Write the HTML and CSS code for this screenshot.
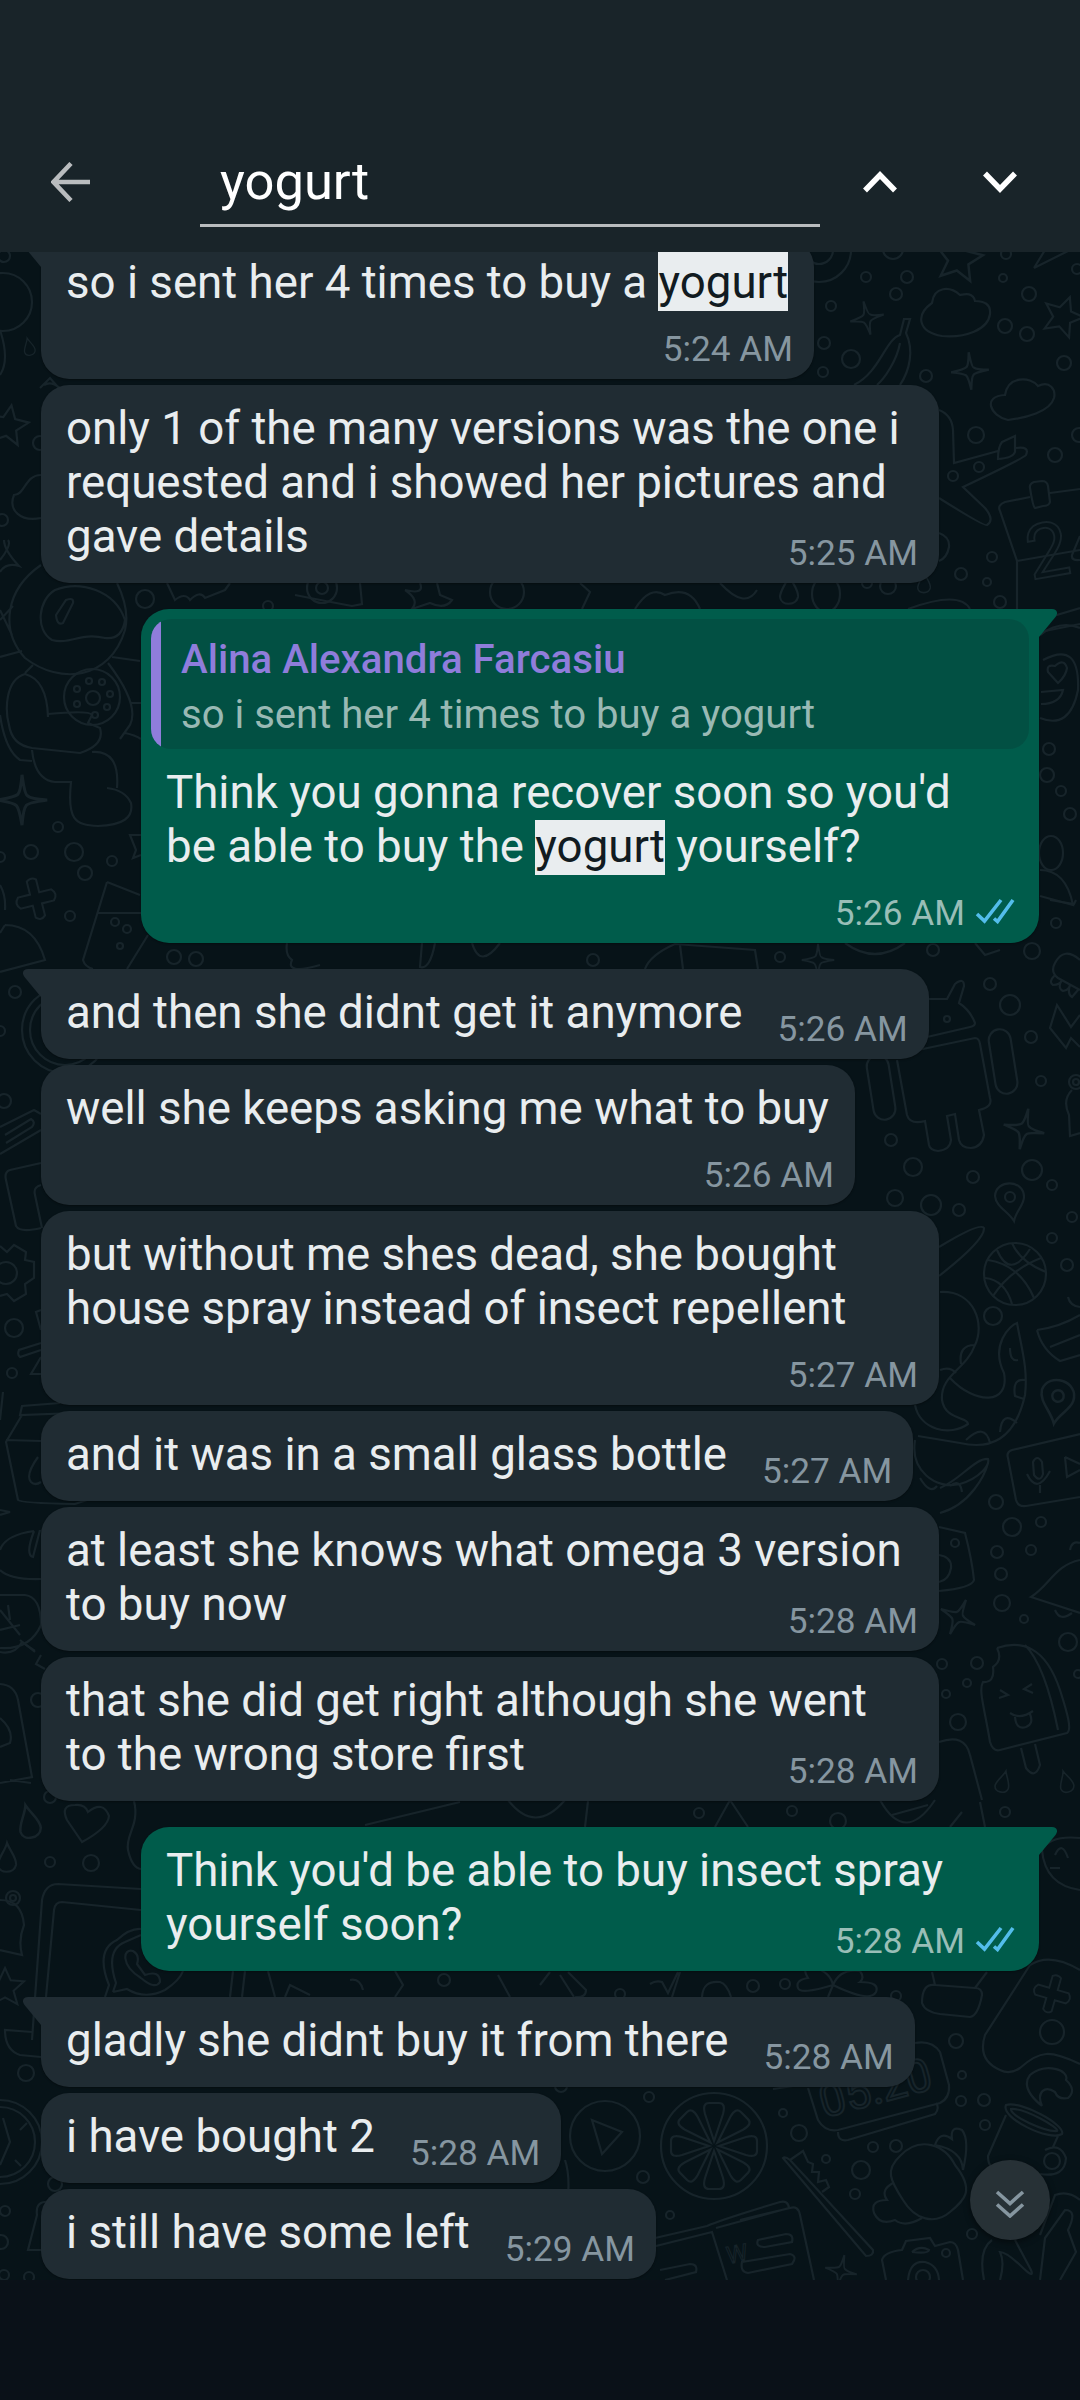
FILE: index.html
```html
<!DOCTYPE html>
<html lang="en">
<head>
<meta charset="utf-8">
<title>Chat search</title>
<link rel="stylesheet" href="styles.css">
</head>
<body>
<svg class="defs" aria-hidden="true">
  <defs>
    <symbol id="tail" viewBox="0 0 18 28"><path d="M18 0H5C0 0-1.500 4 1.500 8L18 28Z"/></symbol>
    <symbol id="ticks" viewBox="0 0 40 26"><path d="M2 16L9.500 23L26 2M19 20.500L22.500 23.500L38 2" fill="none" stroke="currentColor" stroke-width="3.600"/></symbol>
    <path id="spark" d="M0-18Q2-3 4-3Q6-1 18 0Q4 2 3 4Q1 6 0 18Q-2 6-4 4Q-6 2-18 0Q-5-2-3-4Q-1-6 0-18Z"/>
    <path id="star" d="M0-20L6-7L20-6L9 4L13 18L0 11L-13 18L-9 4L-20-6L-6-7Z"/>
    <path id="drop" d="M0-15C3-7 10 0 9 7C7 16-8 16-9 7C-9 0-2-7 0-15Z"/>
    <path id="pin" d="M4 24C-2 14-14 10-15-1C-14-18 14-18 14 0C14 8 6 14 4 24ZM5 0A5 5 0 1 1-5 0A5 5 0 1 1 5 0"/>
    <path id="petal" d="M0-5L-9-32Q-12-43-5-43H5Q12-43 9-32Z"/>
    <path id="plus" d="M-5-20Q0-24 5-20V-6H18Q24 0 18 6H5V19Q0 24-5 19V6H-18Q-24 0-18-6H-5Z"/>
  </defs>
</svg>
<div class="screen">
  <header class="searchbar">
    <svg class="back" viewBox="0 0 40 40"><path d="M20 1.500L2.500 20L20 38.500M2 20H39" /></svg>
    <div class="field">yogurt</div>
    <svg class="nav" viewBox="0 0 36 24"><path d="M3 20.500L18 5L33 20.500"/></svg>
    <svg class="nav" viewBox="0 0 36 24"><path d="M3 3.500L18 19L33 3.500"/></svg>
  </header>

  <main class="chat">
    <svg class="wallpaper" viewBox="0 252 1080 2028" aria-hidden="true">
      <!-- upper right -->
      <circle cx="866" cy="277" r="5"/><circle cx="907" cy="277" r="6"/><circle cx="896" cy="294" r="6"/><circle cx="831" cy="306" r="5"/><circle cx="824" cy="343" r="6"/><circle cx="823" cy="372" r="5"/><circle cx="851" cy="359" r="9"/><circle cx="926" cy="376" r="6"/><circle cx="1029" cy="294" r="7"/><circle cx="1003" cy="278" r="4"/><circle cx="1006" cy="254" r="5"/><circle cx="1005" cy="326" r="7"/><circle cx="1027" cy="334" r="7"/><circle cx="1064" cy="363" r="7"/><circle cx="976" cy="435" r="8"/><circle cx="979" cy="467" r="5"/><circle cx="953" cy="476" r="5"/><circle cx="1055" cy="455" r="7"/><circle cx="1079" cy="435" r="7"/><circle cx="992" cy="557" r="5"/><circle cx="961" cy="574" r="6"/><circle cx="987" cy="582" r="4"/><circle cx="1000" cy="602" r="6"/><circle cx="1077" cy="269" r="5"/><circle cx="893" cy="249" r="10"/>
      <circle cx="819" cy="250" r="32"/><circle cx="819" cy="250" r="14"/><circle cx="867" cy="583" r="5"/><circle cx="888" cy="586" r="8"/>
      <use href="#star" transform="translate(959 258) rotate(10) scale(1.150)"/><use href="#star" transform="translate(1063 316) rotate(20)"/>
      <path d="M932 303C915 315 918 332 942 336C965 338 988 330 990 314C991 304 984 301 975 301C973 292 965 294 960 295C950 286 934 286 932 303ZM1005 395C1008 376 1030 376 1038 386C1050 380 1056 390 1054 398C1050 412 1025 418 1008 420C990 416 982 396 1005 395ZM1034 268L1045 250M1034 268L1070 250"/>
      <use href="#spark" transform="translate(867 318) rotate(-12) scale(.95)"/><use href="#spark" transform="translate(970 371) rotate(-4) scale(1.050)"/>
      <path d="M854 385C880 372 885 340 900 335L904 319H910L906 333C914 350 910 370 900 385M900 343C897 360 885 378 877 385"/>
      <path d="M939 410Q952 415 953 430L954 463L998 451M1016 448Q1030 446 1026 455Q1024 458 963 487L985 508Q995 520 987 525Q985 527 939 498M1002 442L1015 436L1015 452Q1013 458 998 459Q998 447 1002 442Z"/>
      <path d="M1030 497L1005 502Q997 505 1000 511L1017 561V609M1050 493L1080 489M1017 561L1080 550M1034 482L1042 481Q1047 481 1048 486L1050 502Q1049 506 1043 506L1035 508Q1033 507 1030 488Q1029 484 1034 482ZM939 533Q950 537 949 547Q947 558 939 561M908 609Q960 590 970 609M1040 620L1080 608M1045 631L1080 624M1080 536L1072 555Q1071 561 1080 560"/>
      <text x="1031" y="580" font-size="76" transform="rotate(-10 1031 580)">2</text>
      <use href="#drop" x="789" y="590"/><use href="#drop" transform="translate(924 583) scale(.7)"/><ellipse cx="826" cy="594" rx="14" ry="18"/>
      <!-- right, beside the quoted reply -->
      <path d="M1040 635Q1060 620 1080 628M1043 660Q1080 640 1078 690Q1070 730 1040 718M1058 683L1048 672Q1046 664 1055 666Q1064 658 1067 668Q1066 676 1058 683ZM1041 692L1063 690Q1060 704 1041 704M1040 870Q1066 870 1073 905L1040 896"/>
      <circle cx="1049" cy="749" r="6"/><circle cx="1047" cy="775" r="7"/><circle cx="1061" cy="791" r="5"/><circle cx="1070" cy="814" r="6"/><ellipse cx="1051" cy="853" rx="12" ry="17"/><circle cx="1056" cy="923" r="5"/>
      <circle cx="933" cy="950" r="6"/><circle cx="1032" cy="951" r="8"/><circle cx="990" cy="984" r="6"/><circle cx="1010" cy="1005" r="10"/><circle cx="1031" cy="1037" r="6"/><circle cx="1041" cy="1081" r="5"/><circle cx="891" cy="1140" r="6"/>
      <path d="M1080 960Q1064 946 1055 963Q1050 972 1058 978L1080 990M1055 975Q1048 982 1053 985Q1060 985 1062 980Q1057 988 1063 991Q1069 990 1070 985Q1067 994 1072 997L1078 990M1080 1015L1071 1027L1057 1005L1050 1028L1066 1048L1071 1038L1080 1047M1050 900L1074 904L1076 900"/>
      <path d="M925 999H947L955 984Q964 977 964 986L959 1003Q970 1010 975 1023Q975 1026 970 1027L927 1037M918 1050L975 1038Q979 1038 980 1044L990 1098Q993 1107 979 1110L984 1135Q982 1147 971 1148Q961 1148 959 1140L955 1114L947 1116L951 1140Q950 1150 938 1151Q930 1150 929 1145L925 1121Q910 1125 907 1115L897 1060"/>
      <circle cx="947" cy="1019" r="3"/><rect x="992" y="1029" width="22" height="65" rx="11" transform="rotate(-9 1003 1061)"/><rect x="870" y="1055" width="22" height="65" rx="11" transform="rotate(-9 881 1087)"/>
      <use href="#spark" transform="translate(1024 1129) rotate(12) scale(1.150)"/><circle cx="1076" cy="1082" r="7"/><circle cx="1076" cy="1082" r="3"/><path d="M1072 1090Q1062 1100 1069 1115L1070 1136L1080 1133"/>
      <!-- middle right -->
      <circle cx="913" cy="1167" r="9"/><circle cx="973" cy="1177" r="6"/><circle cx="1032" cy="1170" r="10"/><circle cx="1052" cy="1185" r="5"/><circle cx="931" cy="1205" r="10"/><circle cx="895" cy="1198" r="8"/><circle cx="959" cy="1210" r="6"/><circle cx="1072" cy="1217" r="5"/><circle cx="1052" cy="1238" r="5"/><circle cx="1067" cy="1265" r="6"/><circle cx="993" cy="1316" r="9"/>
      <use href="#pin" x="1010" y="1197"/><use href="#pin" transform="translate(1058 1396) rotate(18) scale(1.150)"/>
      <circle cx="1015" cy="1274" r="31"/><path d="M988 1260Q1020 1265 1034 1298M985 1278Q1005 1280 1012 1304M1041 1258Q1010 1270 993 1296M1012 1243Q1020 1262 1046 1272M997 1250Q1010 1280 1030 1249"/>
      <path d="M939 1276Q985 1240 984 1228Q980 1222 939 1247M940 1292C975 1290 985 1325 975 1345C966 1370 940 1375 942 1400C945 1420 968 1417 968 1424C950 1437 920 1430 915 1405M950 1378C975 1405 1010 1405 1004 1373C990 1345 1010 1325 1017 1323C1022 1350 1028 1370 1025 1395C1015 1440 990 1450 960 1443L918 1436M915 1440C910 1470 935 1490 960 1484C980 1478 990 1465 988 1459C975 1458 960 1480 940 1488M940 1513C970 1505 985 1475 988 1463M975 1345Q958 1345 961 1364M940 1370Q950 1366 956 1373M1010 1348Q1010 1362 1018 1360M1025 1380Q1012 1378 1015 1396L1024 1399M1017 1423Q1002 1410 1000 1432M990 1443Q985 1422 966 1440M920 1478Q930 1495 937 1486M950 1486Q960 1478 962 1492"/>
      <path d="M1037 1330Q1060 1327 1080 1315M1037 1330Q1042 1350 1060 1361L1080 1355M1050 1347L1080 1335M1068 1297Q1070 1306 1080 1307M1080 1434L1012 1450Q1006 1452 1008 1458L1016 1500Q1018 1507 1026 1506L1080 1497M1065 1457L1067 1477L1080 1470M1065 1457L1080 1464M1033 1462Q1037 1454 1042 1462L1043 1474Q1040 1483 1034 1475ZM1027 1474Q1037 1495 1050 1471M1040 1485V1493"/>
      <circle cx="996" cy="1502" r="7"/><circle cx="1012" cy="1527" r="9"/><circle cx="1041" cy="1522" r="5"/><circle cx="997" cy="1552" r="6"/><circle cx="1031" cy="1550" r="5"/><circle cx="1001" cy="1574" r="6"/><circle cx="1002" cy="1603" r="8"/><circle cx="1024" cy="1619" r="4"/><circle cx="1068" cy="1642" r="9"/><circle cx="955" cy="1543" r="4"/>
      <path d="M939 1527L965 1533Q972 1560 974 1580Q972 1588 939 1591M939 1555Q952 1557 951 1568Q949 1580 939 1582M1080 1560C1055 1565 1050 1585 1031 1597L1080 1613M1055 1610Q1060 1622 1072 1613M1070 1550Q1072 1540 1080 1543"/>
      <use href="#spark" transform="translate(958 1617) rotate(25) scale(1.050)"/>
      <path d="M997 1648C1020 1640 1045 1645 1060 1690C1068 1715 1072 1730 1067 1733L1000 1750Q993 1752 990 1742C985 1710 978 1690 983 1682Q995 1683 993 1667Q1003 1660 997 1648M1025 1645Q1045 1665 1058 1730M1021 1748L1026 1768Q1035 1780 1040 1765L1035 1744M1000 1690L1008 1695L999 1698M1032 1684L1024 1689L1033 1693M1010 1713Q1020 1720 1033 1711M1015 1717Q1016 1730 1026 1727Q1034 1724 1030 1714M939 1742Q965 1733 970 1755L982 1800"/>
      <circle cx="942" cy="1664" r="5"/><circle cx="977" cy="1663" r="6"/><circle cx="967" cy="1683" r="4"/><circle cx="946" cy="1694" r="4"/><circle cx="958" cy="1722" r="8"/><circle cx="1078" cy="1674" r="4"/><use href="#drop" transform="translate(1003 1782) rotate(15) scale(.75)"/><use href="#drop" transform="translate(1066 1782) rotate(-15) scale(.75)"/>
      <circle cx="699" cy="1813" r="5"/><circle cx="792" cy="1811" r="5"/><circle cx="838" cy="1821" r="8"/><circle cx="1005" cy="1812" r="5"/><path d="M880 1800Q905 1845 935 1800M892 1815L928 1805M715 1827L730 1800L748 1827M980 1802L985 1827M950 1827L962 1812M508 1800Q535 1835 565 1800M585 1827L588 1801M365 1825L460 1802M1080 1838Q1050 1835 1042 1850Q1045 1885 1080 1890M1055 1855Q1062 1840 1068 1858M1050 1868L1060 1868"/>
      <!-- lower right -->
      <circle cx="753" cy="1986" r="6"/><circle cx="785" cy="1984" r="5"/><circle cx="620" cy="1994" r="5"/><circle cx="896" cy="1996" r="5"/><circle cx="1052" cy="2032" r="12"/><circle cx="956" cy="2041" r="7"/><circle cx="962" cy="2075" r="4"/><circle cx="961" cy="2101" r="5"/><circle cx="984" cy="2100" r="6"/><circle cx="985" cy="2125" r="5"/>
      <path d="M833 1985Q800 1995 798 1988Q795 1980 808 1978Q800 1965 815 1968Q830 1972 833 1985Q840 1968 860 1971Q865 1978 860 1982Q880 1982 876 1992Q870 2003 833 1985ZM833 1985L828 1997M932 1972L935 1985M975 1988L987 1972M935 1985Q922 1983 922 2003Q925 2012 940 2014L970 2017Q978 2016 982 1995Q982 1988 975 1988ZM650 1984Q656 1980 662 1982L668 1993L678 1972M680 1972L672 1997M702 1997Q703 1980 720 1982Q727 1984 731 1997M560 1975L574 1997M568 1972L586 1990Q586 1998 575 1997M540 1985L550 1972"/>
      <path d="M1030 1965L985 2035Q977 2060 1000 2070Q1010 2075 1020 2068C1040 2050 1050 2050 1080 2064M1030 1965Q1050 1952 1080 1970"/><use href="#plus" transform="translate(1052 1994) rotate(16) scale(.88)"/>
      <path d="M808 2088L818 2120Q825 2132 838 2130L940 2103Q950 2098 949 2085L940 2052Q932 2040 915 2043M838 2132Q838 2142 848 2140L935 2114Q940 2108 936 2103M773 2089L800 2085"/><text x="824" y="2118" font-size="46" transform="rotate(-15 824 2118)">05:20</text>
      <circle cx="605" cy="2136" r="35"/><path d="M592 2120L622 2132L602 2154Z"/><circle cx="649" cy="2097" r="5"/><circle cx="643" cy="2177" r="6"/><circle cx="561" cy="2086" r="6"/>
      <circle cx="714" cy="2146" r="53"/><g transform="translate(714 2146)"><use href="#petal"/><use href="#petal" transform="rotate(45)"/><use href="#petal" transform="rotate(90)"/><use href="#petal" transform="rotate(135)"/><use href="#petal" transform="rotate(180)"/><use href="#petal" transform="rotate(225)"/><use href="#petal" transform="rotate(270)"/><use href="#petal" transform="rotate(315)"/></g>
      <circle cx="783" cy="2113" r="4"/><circle cx="799" cy="2133" r="8"/><circle cx="826" cy="2159" r="4"/><circle cx="873" cy="2147" r="5"/><circle cx="896" cy="2146" r="6"/><circle cx="861" cy="2170" r="9"/><circle cx="855" cy="2194" r="5"/><circle cx="670" cy="2215" r="4"/><circle cx="972" cy="2234" r="5"/>
      <path d="M783 2158L866 2256Q874 2256 873 2250L790 2160Q785 2156 783 2158ZM790 2160L803 2151L808 2162L813 2164L812 2172L819 2172L818 2182L826 2180L829 2187L822 2192"/>
      <path d="M900 2156C920 2135 945 2145 955 2165C975 2190 965 2200 950 2212C935 2225 915 2220 903 2200C890 2180 885 2170 900 2156ZM935 2145Q940 2130 952 2139Q950 2125 962 2130Q970 2140 963 2170Q962 2150 935 2145M893 2183Q880 2190 887 2200Q870 2200 874 2213Q880 2226 895 2220Q905 2228 922 2218"/>
      <path d="M1042 2106Q1020 2088 1030 2075C1045 2062 1070 2070 1066 2080Q1077 2090 1068 2098Q1058 2100 1055 2092C1045 2085 1036 2092 1042 2106M1006 2105C1020 2100 1066 2125 1062 2134C1050 2142 1000 2118 1006 2105ZM1011 2109C1025 2108 1060 2128 1057 2131C1045 2132 1010 2116 1011 2109ZM1006 2115L988 2156Q988 2170 1000 2170M1058 2136L1053 2147M1045 2150Q1060 2142 1066 2158Q1065 2178 1040 2174"/><circle cx="1052" cy="2161" r="8"/>
      <path d="M655 2238L707 2226Q720 2220 780 2202Q788 2200 789 2208L716 2228M652 2247L712 2232L727 2280M740 2220L790 2208Q798 2205 800 2215L814 2280M758 2240L786 2234Q794 2234 792 2242L765 2247Q755 2247 758 2240ZM742 2262L790 2254Q798 2256 792 2264L748 2273Q740 2272 742 2262ZM660 2270L690 2264Q698 2264 696 2272L665 2280"/><text class="thin" x="728" y="2264" font-size="24" transform="rotate(-10 728 2264)">W</text>
      <use href="#spark" transform="translate(841 2271) rotate(12) scale(.9)"/><path d="M886 2280L882 2260Q884 2252 902 2250L906 2241L930 2238L935 2246L950 2242Q956 2242 958 2250L963 2280M908 2280Q910 2260 925 2262Q938 2265 939 2280M912 2252Q920 2245 929 2250Q928 2254 912 2252"/><circle cx="946" cy="2253" r="4"/><circle cx="923" cy="2277" r="7"/>
      <path d="M984 2280Q978 2250 992 2240M1000 2280Q1005 2262 1000 2252Q1006 2252 1020 2265Q1035 2280 1031 2270L1015 2240M1040 2235L1055 2195Q1068 2190 1080 2200M1040 2280L1045 2238L1065 2210Q1078 2210 1068 2230L1076 2252L1060 2280"/>
      <!-- left edge, top to bottom -->
      <circle cx="3" cy="302" r="29"/><circle cx="4" cy="256" r="6"/><use href="#drop" transform="translate(29 347) rotate(-12) scale(.6)"/><path d="M0 330Q10 360 0 375M40 388L50 378L65 395M44 385Q55 378 70 400"/>
      <use href="#star" transform="translate(8 425) rotate(10)"/><circle cx="40" cy="443" r="7"/><path d="M41 475C25 475 25 495 14 495C8 510 20 522 41 518M0 560Q12 545 8 540"/><circle cx="2" cy="520" r="6"/>
      <path d="M0 572Q6 562 19 566Q4 550 4 540"/>
      <path d="M41 565C5 590 0 630 25 658C60 685 110 680 125 630Q130 610 117 583M55 590C80 580 115 590 125 620Q122 640 105 638C80 632 70 645 52 640C35 630 38 600 55 590ZM56 615L66 600Q74 597 73 603L63 623Q57 626 56 615ZM33 665L25 673M0 657L22 651M0 620L13 606M0 610L12 635M112 657L140 661M108 663Q140 705 130 725L120 739M130 703H141M125 733Q135 735 141 739M48 717Q47 680 25 674C5 680 5 710 9 725Q12 745 32 748L80 753Q105 745 100 728L88 723L92 715Q90 710 48 714M32 750Q35 780 55 782L71 782C67 820 75 825 98 826Q135 825 131 803Q125 790 107 788M92 752Q120 750 117 788M0 715Q5 750 20 760L32 761"/>
      <circle cx="92" cy="697" r="28"/><circle cx="93" cy="698" r="7"/><circle cx="89" cy="681" r="3"/><circle cx="102" cy="682" r="3"/><circle cx="110" cy="694" r="3"/><circle cx="107" cy="707" r="3"/><circle cx="77" cy="704" r="3"/><circle cx="77" cy="689" r="3"/><circle cx="95" cy="715" r="3"/>
      <use href="#spark" transform="translate(22 800) scale(1.400)"/><circle cx="58" cy="827" r="5"/><circle cx="31" cy="852" r="7"/><circle cx="74" cy="852" r="9"/><circle cx="85" cy="873" r="7"/><circle cx="112" cy="861" r="5"/><circle cx="0" cy="857" r="5"/><circle cx="70" cy="916" r="5"/><use href="#plus" transform="translate(36 899) rotate(-14) scale(.95)"/>
      <path d="M141 835H130L136 850L133 858L141 855M107 882L140 895M107 882L83 960Q85 967 93 969M98 913H141M148 935L127 969M0 885Q6 895 5 910M5 925Q35 925 45 960L0 972M0 933L5 925"/><circle cx="115" cy="922" r="4"/><circle cx="127" cy="929" r="4"/><circle cx="120" cy="946" r="3"/><circle cx="15" cy="992" r="6"/><circle cx="0" cy="1031" r="5"/><circle cx="145" cy="599" r="9"/>
      <circle cx="65" cy="1030" r="43"/><circle cx="65" cy="1030" r="35"/><circle cx="4" cy="1101" r="7"/>
      <path d="M0 1127L34 1110L41 1114M0 1154L41 1130M5 1135L31 1119Q36 1122 32 1127L6 1143M41 1163L10 1170Q4 1172 6 1180L16 1226Q20 1233 41 1228M41 1185Q33 1187 35 1195L42 1228"/>
      <path d="M0 1246L7 1252L14 1245L26 1252L25 1260L34 1262V1278L25 1284L26 1294L14 1301L7 1294L0 1296"/><circle cx="6" cy="1273" r="11"/><circle cx="14" cy="1328" r="9"/><circle cx="12" cy="1373" r="5"/>
      <path d="M41 1310L36 1312L41 1330M41 1343L19 1350Q17 1355 20 1357L41 1350M41 1357L31 1374H41M0 1420L3 1392M60 1403L22 1406L20 1415L75 1413M22 1415L6 1442L18 1500Q20 1503 75 1504L90 1499M6 1440L41 1441M38 1457Q25 1475 31 1482Q35 1486 41 1482M0 1510L10 1512L0 1515M34 1531Q5 1535 0 1550M34 1531Q25 1555 33 1557L40 1530M0 1570Q10 1580 41 1579M0 1595H25Q41 1597 41 1625Q30 1650 0 1648M0 1610L20 1635M8 1605L10 1620M0 1630L20 1625M20 1640L35 1652"/>
      <circle cx="38" cy="1700" r="7"/><path d="M0 1684Q15 1685 18 1700L32 1777L0 1783M0 1718Q14 1730 10 1743L0 1747M10 1780L31 1783M41 1655L36 1664L45 1669M0 1652Q15 1655 22 1642L35 1651"/>
      <circle cx="50" cy="1797" r="6"/><use href="#drop" transform="translate(29 1822) rotate(-12) scale(1.150)"/><use href="#drop" transform="translate(7 1858)"/><circle cx="50" cy="1862" r="5"/><circle cx="91" cy="1863" r="8"/><path d="M82 1842L67 1820Q60 1805 75 1805Q85 1804 88 1812Q103 1800 109 1816Q108 1828 82 1842ZM134 1801C140 1825 125 1835 128 1850Q132 1868 141 1869"/>
      <path d="M32 2040L42 1900Q45 1884 58 1884L141 1889M46 1997L54 1910Q55 1902 62 1902L141 1910M105 1997L109 1985Q95 1950 117 1940Q130 1928 141 1929M113 1992L116 1983Q105 1950 125 1942L141 1935M113 1992L127 1989Q145 2000 165 1990Q180 1980 183 1971M141 1978C120 1965 123 1948 133 1951Q140 1955 137 1964L145 1975Q160 1970 160 1982Q155 1990 141 1978M233 1971L230 1997M245 1971L242 1997"/>
      <circle cx="13" cy="1898" r="7"/><circle cx="13" cy="1898" r="3"/><path d="M0 1900Q22 1900 24 1925Q18 1940 22 1955L0 1950"/><use href="#star" transform="translate(5 1987) scale(.95)"/><path d="M32 2032L5 2030Q5 2050 20 2055L41 2057"/><circle cx="26" cy="2073" r="8"/>
      <circle cx="0" cy="2142" r="42"/><circle cx="0" cy="2142" r="35"/><path d="M3 2118L10 2142L0 2165M20 2130L27 2123M15 2160L21 2166M50 2202Q35 2200 37 2215L28 2250H41"/><circle cx="55" cy="2184" r="7"/><circle cx="5" cy="2211" r="5"/><circle cx="1" cy="2242" r="7"/><circle cx="4" cy="2275" r="5"/><circle cx="29" cy="2277" r="5"/>
      <!-- pieces that show between the bubbles -->
      <path d="M167 583L175 600Q185 592 190 600Q200 590 205 598L225 590L230 583M360 583L362 604L352 606Q320 600 295 595M405 590Q425 595 420 583M405 590Q420 600 412 609L430 603Q445 610 452 600L440 595L437 583M580 583L590 592L582 609M635 609Q650 585 665 595Q690 585 700 609M720 583Q745 610 757 590"/><circle cx="322" cy="588" r="15"/><circle cx="322" cy="588" r="6"/><circle cx="507" cy="592" r="17"/><circle cx="268" cy="606" r="5"/>
      <path d="M287 943Q285 955 292 960Q285 975 320 965M422 943L420 967Q430 970 435 943M472 943Q480 970 500 943M645 969Q650 955 675 944L755 950L758 969M680 945L683 969M845 943Q875 965 905 943M975 943L985 955L1000 950"/><circle cx="174" cy="957" r="7"/><circle cx="196" cy="959" r="7"/><circle cx="593" cy="960" r="6"/><circle cx="780" cy="957" r="5"/><use href="#spark" transform="translate(818 960) scale(.9)"/>
      <path d="M268 1971L275 1997M285 1997L290 1985L310 1995M350 1980Q360 1978 363 1990M395 1971L403 1985L395 1997M498 1975L510 1997"/><circle cx="444" cy="1980" r="6"/><path d="M565 2160Q572 2180 565 2220"/>
    </svg>

    <div class="messages">
      <div class="bubble in first"><svg class="tail"><use href="#tail"/></svg><p class="text">so i sent her 4 times to buy a <mark>yogurt</mark></p><time class="time below">5:24 AM</time></div>
      <div class="bubble in wide"><p class="text">only 1 of the many versions was the one i<br>requested and i showed her pictures and<br>gave details</p><time class="time inset">5:25 AM</time></div>

      <div class="bubble out start"><svg class="tail"><use href="#tail"/></svg>
        <div class="quote"><p class="author">Alina Alexandra Farcasiu</p><p class="quoted">so i sent her 4 times to buy a yogurt</p></div>
        <p class="text">Think you gonna recover soon so you'd<br>be able to buy the <mark>yogurt</mark> yourself?</p>
        <div class="time below">5:26 AM<svg class="ticks"><use href="#ticks"/></svg></div></div>

      <div class="bubble in start line"><svg class="tail"><use href="#tail"/></svg><p class="text">and then she didnt get it anymore</p><time class="time">5:26 AM</time></div>
      <div class="bubble in"><p class="text">well she keeps asking me what to buy</p><time class="time below">5:26 AM</time></div>
      <div class="bubble in wide"><p class="text">but without me shes dead, she bought<br>house spray instead of insect repellent</p><time class="time below">5:27 AM</time></div>
      <div class="bubble in line"><p class="text">and it was in a small glass bottle</p><time class="time">5:27 AM</time></div>
      <div class="bubble in wide"><p class="text">at least she knows what omega 3 version<br>to buy now</p><time class="time inset">5:28 AM</time></div>
      <div class="bubble in wide"><p class="text">that she did get right although she went<br>to the wrong store first</p><time class="time inset">5:28 AM</time></div>

      <div class="bubble out start"><svg class="tail"><use href="#tail"/></svg><p class="text">Think you'd be able to buy insect spray<br>yourself soon?</p><div class="time inset">5:28 AM<svg class="ticks"><use href="#ticks"/></svg></div></div>

      <div class="bubble in start line"><svg class="tail"><use href="#tail"/></svg><p class="text">gladly she didnt buy it from there</p><time class="time">5:28 AM</time></div>
      <div class="bubble in line"><p class="text">i have bought 2</p><time class="time">5:28 AM</time></div>
      <div class="bubble in line"><p class="text">i still have some left</p><time class="time">5:29 AM</time></div>
    </div>

    <div class="jump"><svg viewBox="0 0 30 28"><path d="M2 2L15 13.500L28 2M2 14.500L15 26L28 14.500"/></svg></div>
  </main>
</div>
</body>
</html>
```
FILE: styles.css
```css
* { box-sizing: border-box; }
body { margin: 0; background: #0a1118; font-family: Roboto, sans-serif; }
p { margin: 0; }
.defs { position: absolute; width: 0; height: 0; }
.screen { width: 1080px; height: 2400px; display: flex; flex-direction: column; overflow: hidden; }

.searchbar { height: 252px; flex: none; background: #192429; display: flex; align-items: flex-start; padding: 137px 62px 0 51px; }
.searchbar path { fill: none; stroke: #fff; stroke-width: 5.5; }
.back { width: 40px; height: 40px; margin-top: 25px; flex: none; }
.searchbar .back path { stroke: #b9bcbe; stroke-width: 4.5; }
.field { width: 620px; height: 90px; margin-left: 109px; padding-left: 20px; border-bottom: 3px solid #b9bcbe; color: #fff; font-size: 52.5px; line-height: 88px; }
.nav { width: 36px; height: 24px; margin: 33px 0 0 42px; flex: none; }
.nav + .nav { margin-left: 84px; }

.chat { position: relative; height: 2028px; flex: none; overflow: hidden; background: #071318; }
.wallpaper { position: absolute; inset: 0; width: 1080px; height: 2028px; fill: none; stroke: #17242a; stroke-width: 2.2; }
.wallpaper text { font-family: Roboto, sans-serif; stroke-width: 2; }
.wallpaper .thin { stroke-width: 1; }

.messages { position: relative; display: flex; flex-direction: column; align-items: flex-start; gap: 6px; padding: 0 41px; margin-top: -13px; }
.bubble { position: relative; display: flex; flex-direction: column; border-radius: 28px; padding: 17px 21px 9px 25px; color: #e9edef; box-shadow: 0 1px 2px rgba(0, 0, 0, .35); }
.in { background: #202c33; fill: #202c33; }
.in.wide { width: 898px; }
.out { background: #005c4b; fill: #005c4b; width: 898px; align-self: flex-end; border-top-right-radius: 0; }
.in.start, .in.first { border-top-left-radius: 0; }
.start { margin-top: 20px; }

.tail { position: absolute; top: 0; left: -18px; width: 18px; height: 28px; }
.out .tail { left: auto; right: -18px; transform: scaleX(-1); }

.text { font-size: 45.65px; line-height: 54px; white-space: nowrap; margin-right: 5px; }
mark { background: #e9edef; color: #111b21; padding-bottom: 2px; }
.first mark { padding-top: 5px; }
.time { align-self: flex-end; display: flex; font-size: 35.2px; line-height: 42px; color: #8696a0; white-space: nowrap; }
.below { margin-top: 18px; }
.inset { margin-top: -32px; }
.line { flex-direction: row; gap: 30px; }
.line .text { padding-bottom: 10px; }

.out .time { color: #99beb7; }
.ticks { width: 40px; height: 26px; margin: 6px 3px 0 10px; color: #53bdeb; }
.quote { width: 878px; height: 130px; margin: -7px 0 17px -15px; padding: 17px 20px 0 30px; border-radius: 20px; background: linear-gradient(to right, #8f7ddb 10px, #025043 10px); }
.author { color: #8f7ddb; font-size: 40.2px; line-height: 47px; font-weight: 500; }
.quoted { color: #99b9b4; font-size: 40.1px; line-height: 47px; margin-top: 8px; }

.jump { position: absolute; left: 970px; top: 1908px; width: 80px; height: 80px; border-radius: 50%; background: #273136; box-shadow: 0 2px 6px rgba(0, 0, 0, .5); display: flex; align-items: center; justify-content: center; padding-top: 7px; }
.jump svg { width: 30px; height: 28px; fill: none; stroke: #8696a0; stroke-width: 3.6; }
```
